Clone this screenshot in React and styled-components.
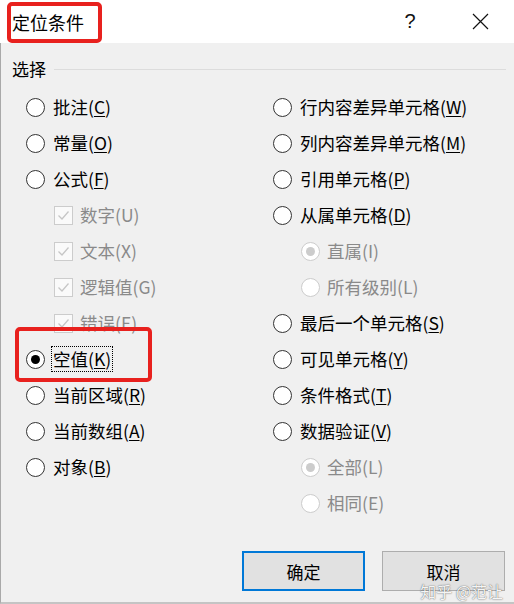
import React from 'react';
import styled, { createGlobalStyle } from 'styled-components';

const Global = createGlobalStyle`
  body {
    margin: 0;
    background: #f0f0f0;
    font-family: "Noto Sans CJK SC", "Noto Sans", sans-serif;
  }
`;

const Dialog = styled.div`
  width: 514px;
  height: 604px;
  display: flex;
  flex-direction: column;
  background: #f0f0f0;
  position: relative;
  overflow: hidden;
`;

const TitleBar = styled.div`
  height: 43px;
  flex: none;
  background: #fff;
  display: flex;
  align-items: center;
  padding-left: 12px;
  padding-right: 11px;
  gap: 24px;
`;

const Title = styled.span`
  font-size: 18px;
  color: #000;
  flex: 1;
`;

const TitleButton = styled.div`
  width: 46px;
  height: 43px;
  display: flex;
  align-items: center;
  justify-content: center;
  font-family: "Liberation Sans", sans-serif;
  font-size: 20px;
  color: #111;
`;

const Mark = styled.div`
  position: absolute;
  left: ${p => p.$x}px;
  top: ${p => p.$y}px;
  width: ${p => p.$w}px;
  height: ${p => p.$h}px;
  border: 4px solid #e8211e;
  border-radius: 5px;
  box-sizing: border-box;
  pointer-events: none;
`;

const Body = styled.div`
  flex: 1;
  display: flex;
  flex-direction: column;
  border-left: 1px solid #a9a9a9;
  border-bottom: 2px solid #c4c4c4;
`;

const GroupHead = styled.div`
  display: flex;
  align-items: center;
  gap: 8px;
  padding: 14px 8px 0 11px;
  font-size: 17px;
  line-height: 24px;
  color: #000;
`;

const GroupLine = styled.div`
  flex: 1;
  height: 1px;
  background: #dcdcdc;
`;

const Options = styled.div`
  display: grid;
  grid-template-columns: 247px 1fr;
  padding: 8px 0 0 25px;
`;

const Column = styled.div`
  display: flex;
  flex-direction: column;
`;

const Row = styled.div`
  height: 36px;
  display: flex;
  align-items: center;
  gap: ${p => (p.$sub ? 6 : 7)}px;
  padding-left: ${p => (p.$sub ? 28 : 0)}px;
  font-size: 17.5px;
  color: ${p => (p.$disabled ? '#8a8a8a' : '#000')};
  white-space: nowrap;
`;

const Radio = styled.span`
  width: 19px;
  height: 19px;
  flex: none;
  box-sizing: border-box;
  border-radius: 50%;
  border: 1px solid ${p => (p.$disabled ? '#cccccc' : '#333')};
  background: #fff;
  display: flex;
  align-items: center;
  justify-content: center;

  &::after {
    content: '';
    display: ${p => (p.$checked ? 'block' : 'none')};
    width: 9px;
    height: 9px;
    border-radius: 50%;
    background: ${p => (p.$disabled ? '#cccccc' : '#000')};
  }
`;

const Check = styled.span`
  width: 19px;
  height: 19px;
  flex: none;
  box-sizing: border-box;
  border: 1px solid #cccccc;
  background: #fafafa;
  display: flex;
  align-items: center;
  justify-content: center;
`;

const Label = styled.span`
  line-height: 24px;
  padding: 0 1px;
  outline: ${p => (p.$focus ? '1px dotted #000' : 'none')};
`;

const Key = styled.span`
  text-decoration: ${p => (p.$on ? 'underline' : 'none')};
  text-underline-offset: 2px;
`;

const Footer = styled.div`
  margin-top: auto;
  display: flex;
  justify-content: flex-end;
  gap: 17px;
  padding: 0 9px 11px 0;
`;

const Button = styled.div`
  width: 123px;
  height: 40px;
  box-sizing: border-box;
  display: flex;
  align-items: center;
  justify-content: center;
  background: #e1e1e1;
  border: ${p => (p.$primary ? '2px solid #0078d7' : '1px solid #adadad')};
  font-size: 17px;
  color: #000;
`;

const Watermark = styled.div`
  position: absolute;
  right: 11px;
  bottom: 4px;
  font-size: 16px;
  line-height: 18px;
  color: rgba(255, 255, 255, 0.95);
  text-shadow: 0 0 1px rgba(0, 0, 0, 0.6), 0 0 2px rgba(0, 0, 0, 0.25);
`;

const CheckMark = () => (
  <svg width="15" height="15" viewBox="0 0 15 15">
    <path d="M2.5 7.5 L6 11 L12.5 3.5" fill="none" stroke="#c6c6c6" strokeWidth="1.3" />
  </svg>
);

const CloseIcon = () => (
  <svg width="17" height="17" viewBox="0 0 17 17">
    <path d="M1 1 L16 16 M16 1 L1 16" stroke="#111" strokeWidth="1.2" />
  </svg>
);

const left = [
  { type: 'radio', text: '批注', key: 'C' },
  { type: 'radio', text: '常量', key: 'O' },
  { type: 'radio', text: '公式', key: 'F' },
  { type: 'check', text: '数字', key: 'U' },
  { type: 'check', text: '文本', key: 'X' },
  { type: 'check', text: '逻辑值', key: 'G' },
  { type: 'check', text: '错误', key: 'E' },
  { type: 'radio', text: '空值', key: 'K', checked: true, focus: true },
  { type: 'radio', text: '当前区域', key: 'R' },
  { type: 'radio', text: '当前数组', key: 'A' },
  { type: 'radio', text: '对象', key: 'B' },
];

const right = [
  { type: 'radio', text: '行内容差异单元格', key: 'W' },
  { type: 'radio', text: '列内容差异单元格', key: 'M' },
  { type: 'radio', text: '引用单元格', key: 'P' },
  { type: 'radio', text: '从属单元格', key: 'D' },
  { type: 'sub', text: '直属', key: 'I', checked: true },
  { type: 'sub', text: '所有级别', key: 'L' },
  { type: 'radio', text: '最后一个单元格', key: 'S' },
  { type: 'radio', text: '可见单元格', key: 'Y' },
  { type: 'radio', text: '条件格式', key: 'T' },
  { type: 'radio', text: '数据验证', key: 'V' },
  { type: 'sub', text: '全部', key: 'L', checked: true },
  { type: 'sub', text: '相同', key: 'E' },
];

const Option = ({ item }) => {
  const disabled = item.type !== 'radio';
  const sub = item.type !== 'radio';
  return (
    <Row $disabled={disabled} $sub={sub}>
      {item.type === 'check' ? (
        <Check><CheckMark /></Check>
      ) : (
        <Radio $checked={item.checked} $disabled={disabled} />
      )}
      <Label $focus={item.focus}>
        {item.text}(<Key $on={!disabled}>{item.key}</Key>)
      </Label>
    </Row>
  );
};

export default function App() {
  return (
    <Dialog>
      <Global />
      <TitleBar>
        <Title>定位条件</Title>
        <TitleButton>?</TitleButton>
        <TitleButton><CloseIcon /></TitleButton>
      </TitleBar>
      <Body>
        <GroupHead>
          选择
          <GroupLine />
        </GroupHead>
        <Options>
          <Column>
            {left.map((item, i) => <Option key={i} item={item} />)}
          </Column>
          <Column>
            {right.map((item, i) => <Option key={i} item={item} />)}
          </Column>
        </Options>
        <Footer>
          <Button $primary>确定</Button>
          <Button>取消</Button>
        </Footer>
      </Body>
      <Watermark>知乎 @范让</Watermark>
      <Mark $x={7} $y={2} $w={95} $h={41} />
      <Mark $x={15} $y={327} $w={137} $h={55} />
    </Dialog>
  );
}
